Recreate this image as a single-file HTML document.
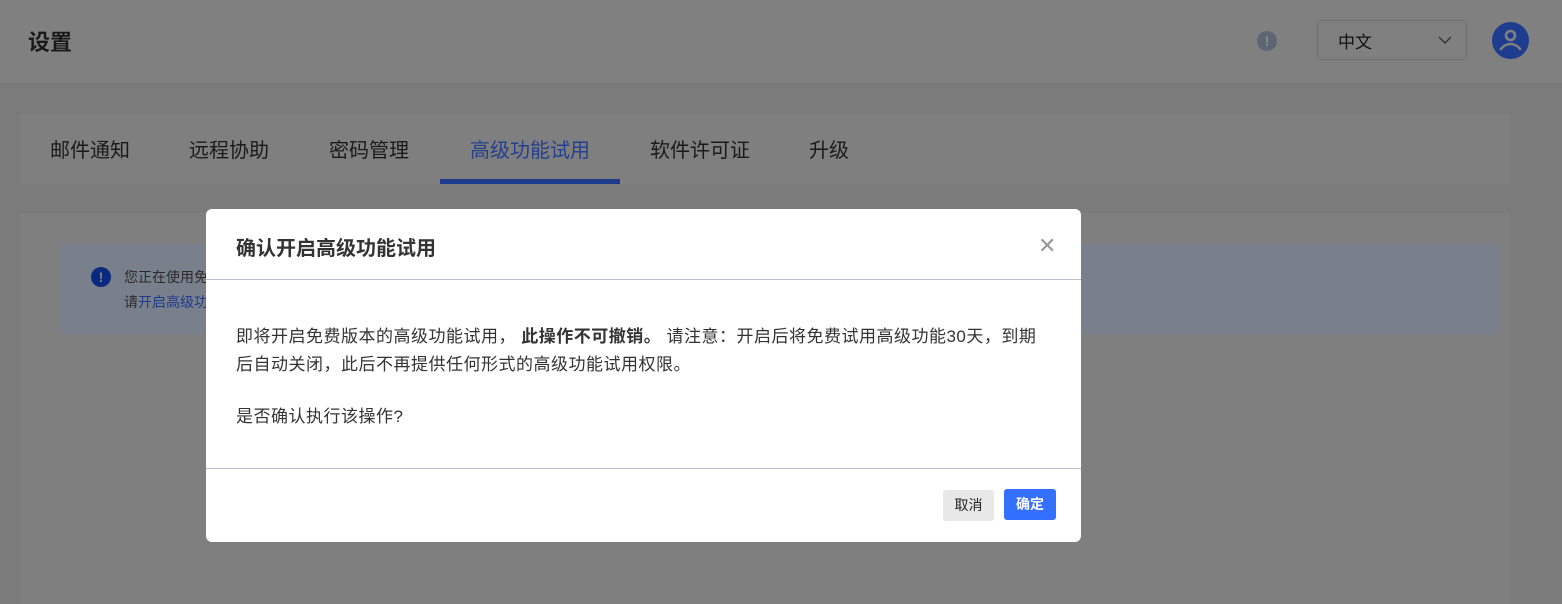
<!DOCTYPE html>
<html><head><meta charset="utf-8"><style>
*{margin:0;padding:0;box-sizing:border-box}
html,body{width:1562px;height:604px;overflow:hidden}
body{background:#7b7b7b;font-family:"Liberation Sans","Noto Sans CJK SC",sans-serif;position:relative}
.hdr{position:absolute;left:0;top:0;width:1562px;height:84px;background:#808080;border-bottom:1px solid #777}
.title{position:absolute;left:28px;top:25px;font-size:22px;font-weight:bold;color:#1a1a1a}
.warn{position:absolute;left:1257px;top:31px;width:20px;height:20px;border-radius:50%;background:#5e6673;color:#8a8a8a;font-size:14px;font-weight:bold;text-align:center;line-height:20px}
.sel{position:absolute;left:1317px;top:20px;width:150px;height:40px;border:1px solid #6e6e6e;border-radius:4px}
.sel span{position:absolute;left:20px;top:7px;font-size:17px;color:#111}
.av{position:absolute;left:1492px;top:22px;width:37px;height:37px;border-radius:50%;background:#1e3d8f}
.tabs{position:absolute;left:20px;top:114px;width:1490px;height:70px;background:#7f7f7f}
.tab{position:absolute;top:20px;font-size:20px;color:#1a1a1a}
.ul{position:absolute;left:420px;top:65px;width:180px;height:5px;background:#1e3a8a}
.card{position:absolute;left:20px;top:213px;width:1490px;height:391px;background:#7f7f7f}
.info{position:absolute;left:60px;top:244px;width:1439px;height:90px;background:#79808c}
.ic{position:absolute;left:91px;top:267px;width:20px;height:20px;border-radius:50%;background:#0a2a80;color:#79808c;font-size:14px;font-weight:bold;text-align:center;line-height:20px}
.it{position:absolute;left:124px;font-size:14px;color:#2a2a2a}
.dlg{position:absolute;left:206px;top:209px;width:875px;height:333px;background:#fff;border-radius:6px}
.dt{position:absolute;left:30px;top:23px;font-size:20px;font-weight:bold;color:#333}
.x{position:absolute;left:832px;top:24px;font-size:22px;color:#999;font-weight:300}
.l1{position:absolute;left:0;top:70px;width:875px;height:1px;background:#b8c2d2}
.l2{position:absolute;left:0;top:259px;width:875px;height:1px;background:#b8c2d2}
.p{position:absolute;left:30px;font-size:17px;letter-spacing:0.5px;color:#333;white-space:nowrap}
.b1{position:absolute;left:737px;top:281px;width:51px;height:31px;background:#e8e8e8;border-radius:3px;font-size:14px;color:#222;text-align:center;line-height:31px}
.b2{position:absolute;left:798px;top:280px;width:52px;height:31px;background:#3370ff;border-radius:3px;font-size:14px;color:#fff;font-weight:bold;text-align:center;line-height:31px}
</style></head><body>
<div class="hdr">
<div class="title">设置</div>
<div class="warn">!</div>
<div class="sel"><span>中文</span>
<svg style="position:absolute;left:120px;top:15px" width="14" height="9" viewBox="0 0 14 9"><path d="M1 1l6 6 6-6" fill="none" stroke="#333" stroke-width="1.4"/></svg></div>
<div class="av"><svg width="37" height="37" viewBox="0 0 37 37"><circle cx="18.5" cy="13.5" r="4.5" fill="none" stroke="#808080" stroke-width="2.6"/><path d="M9 27c3-4 6-5 9.5-5s6.5 1 9.5 5" fill="none" stroke="#808080" stroke-width="2.6" stroke-linecap="round"/></svg></div>
</div>
<div class="tabs">
<div class="tab" style="left:30px">邮件通知</div>
<div class="tab" style="left:169px">远程协助</div>
<div class="tab" style="left:309px">密码管理</div>
<div class="tab" style="left:450px;color:#23408e">高级功能试用</div>
<div class="tab" style="left:630px">软件许可证</div>
<div class="tab" style="left:789px">升级</div>
<div class="ul"></div>
</div>
<div class="card"></div>
<div class="info"></div>
<div class="ic">!</div>
<div class="it" style="top:267px">您正在使用免</div>
<div class="it" style="top:292px">请<span style="color:#1e3a8a">开启高级功</span></div>
<div class="dlg">
<div class="dt">确认开启高级功能试用</div>
<div class="x">✕</div>
<div class="l1"></div>
<div class="p" style="top:113px">即将开启免费版本的高级功能试用， <b>此操作不可撤销。</b> 请注意：开启后将免费试用高级功能30天，到期</div>
<div class="p" style="top:141px">后自动关闭，此后不再提供任何形式的高级功能试用权限。</div>
<div class="p" style="top:193px">是否确认执行该操作?</div>
<div class="l2"></div>
<div class="b1">取消</div>
<div class="b2">确定</div>
</div>
</body></html>
